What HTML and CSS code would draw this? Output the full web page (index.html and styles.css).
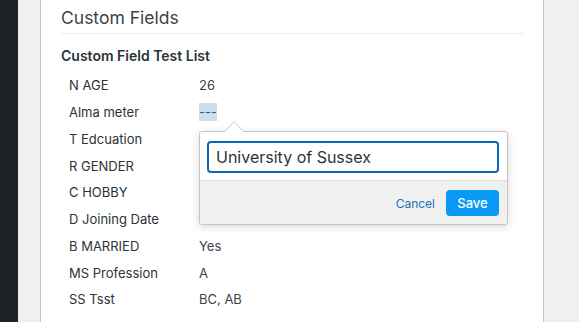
FILE: index.html
```html
<!DOCTYPE html>
<html lang="en">
<head>
  <meta charset="UTF-8" />
  <title>Custom Fields</title>
  <link rel="stylesheet" href="styles.css">
</head>
<body>
  <div class="layout">
    <aside class="sidebar"></aside>
    <main class="content">
      <section class="panel">
        <h2 class="panel-title">Custom Fields</h2>
        <h3 class="list-title">Custom Field Test List</h3>
        <div class="fields">
          <div class="row"><span class="label">N AGE</span><span class="value">26</span></div>
          <div class="row">
            <span class="label">Alma meter</span>
            <span class="value">
              <span class="editable">---</span>
              <div class="popover">
                <div class="popover-body">
                  <input type="text" class="pop-input" value="University of Sussex" />
                </div>
                <div class="popover-footer">
                  <a href="#" class="cancel">Cancel</a>
                  <button class="save">Save</button>
                </div>
              </div>
            </span>
          </div>
          <div class="row"><span class="label">T Edcuation</span><span class="value"></span></div>
          <div class="row"><span class="label">R GENDER</span><span class="value"></span></div>
          <div class="row"><span class="label">C HOBBY</span><span class="value"></span></div>
          <div class="row"><span class="label">D Joining Date</span><span class="value"></span></div>
          <div class="row"><span class="label">B MARRIED</span><span class="value">Yes</span></div>
          <div class="row"><span class="label">MS Profession</span><span class="value">A</span></div>
          <div class="row"><span class="label">SS Tsst</span><span class="value">BC, AB</span></div>
        </div>
      </section>
    </main>
  </div>
</body>
</html>
```

FILE: styles.css
```css
* {
  margin: 0;
  padding: 0;
  box-sizing: border-box;
  font-family: 'Inter', 'Liberation Sans', sans-serif;
}

body {
  background: #f0f0f1;
  color: #3c434a;
  height: 322px;
  overflow: hidden;
}

.layout {
  display: flex;
  height: 100%;
}

.sidebar {
  width: 18px;
  background: #1d2327;
  flex-shrink: 0;
}

.content {
  padding-left: 22px;
  width: 526px;
}

.panel {
  background: #fff;
  border-left: 1px solid #c3c4c7;
  border-right: 1px solid #c3c4c7;
  height: 100%;
  padding: 6px 19px 0 20px;
}

.panel-title {
  font-size: 17.5px;
  font-weight: 400;
  color: #3c434a;
  line-height: 24px;
  padding-bottom: 3px;
  border-bottom: 1px solid #eeeeee;
}

.list-title {
  font-size: 14px;
  font-weight: 600;
  color: #2c3338;
  margin-top: 13px;
  line-height: 18px;
}

.fields {
  margin-top: 7px;
  padding-left: 8px;
}

.row {
  display: flex;
  height: 26.75px;
  align-items: center;
  font-size: 13px;
}

.label {
  width: 130px;
  color: #2c3338;
}

.value {
  position: relative;
}

.editable {
  background: #c9dff0;
  color: #50575e;
  padding: 1px 0;
}

.popover {
  position: absolute;
  top: 27px;
  left: 0;
  width: 309px;
  background: #fff;
  border: 1px solid #c3c4c7;
  border-radius: 3px;
  box-shadow: 0 2px 8px rgba(0, 0, 0, 0.15);
  z-index: 5;
}

.popover::before,
.popover::after {
  content: "";
  position: absolute;
  left: 24px;
  border: 10px solid transparent;
  border-top: 0;
}

.popover::before {
  top: -11px;
  border-bottom: 11px solid #c3c4c7;
}

.popover::after {
  top: -10px;
  border-bottom: 11px solid #fff;
}

.popover-body {
  padding: 9px 8px 7px 7px;
}

.pop-input {
  width: 100%;
  height: 32px;
  border: 2px solid #0a66b7;
  border-radius: 4px;
  padding: 0 7px;
  font-size: 16px;
  color: #2c3338;
  outline: none;
}

.popover-footer {
  background: #f0f0f0;
  border-top: 1px solid #dcdcde;
  border-radius: 0 0 3px 3px;
  display: flex;
  justify-content: flex-end;
  align-items: center;
  gap: 11px;
  padding: 9px 8px 8px;
}

.cancel {
  font-size: 12px;
  color: #2271b1;
  text-decoration: none;
}

.save {
  background: #0a9af5;
  color: #fff;
  border: none;
  border-radius: 4px;
  height: 26px;
  width: 53px;
  font-size: 13px;
  font-weight: 500;
}
```
